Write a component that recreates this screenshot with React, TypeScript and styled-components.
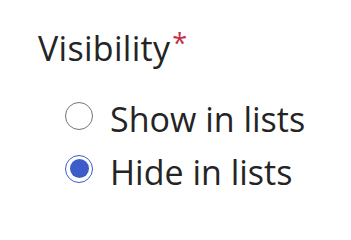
import React, { useState } from "react";
import styled, { createGlobalStyle } from "styled-components";

const Global = createGlobalStyle`
  html, body { margin: 0; padding: 0; background: #ffffff; }
  body { font-family: "Open Sans", "Noto Sans", sans-serif; color: #242424; }
`;

const Field = styled.div`
  display: flex;
  flex-direction: column;
  padding: 24px 0 0 38px;
`;

const Label = styled.div`
  font-size: 34px;
  line-height: 48px;
  color: #242424;
  letter-spacing: 0.3px;
`;

const Required = styled.span`
  color: #c4314b;
  font-size: 27px;
  vertical-align: top;
  line-height: 38px;
  margin-left: 2px;
`;

const Group = styled.div`
  display: flex;
  flex-direction: column;
  padding: 17px 0 0 27px;
`;

const Option = styled.label`
  display: flex;
  align-items: center;
  gap: 17px;
  height: 53px;
  font-size: 34px;
  cursor: pointer;
`;

const Circle = styled.span<{ $checked: boolean }>`
  box-sizing: border-box;
  width: 28px;
  height: 28px;
  border-radius: 50%;
  border: 1.5px solid ${(p) => (p.$checked ? "#3b5cc9" : "#747474")};
  display: flex;
  align-items: center;
  justify-content: center;
  flex: none;
  &::after {
    content: "";
    width: 19px;
    height: 19px;
    border-radius: 50%;
    background: #3b5cc9;
    display: ${(p) => (p.$checked ? "block" : "none")};
  }
`;

const Text = styled.span`
  line-height: 53px;
  margin-top: 8px;
`;

export default function App() {
  const [value, setValue] = useState("hide");
  const options = [
    { id: "show", label: "Show in lists" },
    { id: "hide", label: "Hide in lists" },
  ];
  return (
    <>
      <Global />
      <Field>
        <Label>
          Visibility<Required>*</Required>
        </Label>
        <Group role="radiogroup">
          {options.map((o) => (
            <Option key={o.id} onClick={() => setValue(o.id)}>
              <Circle $checked={value === o.id} role="radio" aria-checked={value === o.id} />
              <Text>{o.label}</Text>
            </Option>
          ))}
        </Group>
      </Field>
    </>
  );
}
